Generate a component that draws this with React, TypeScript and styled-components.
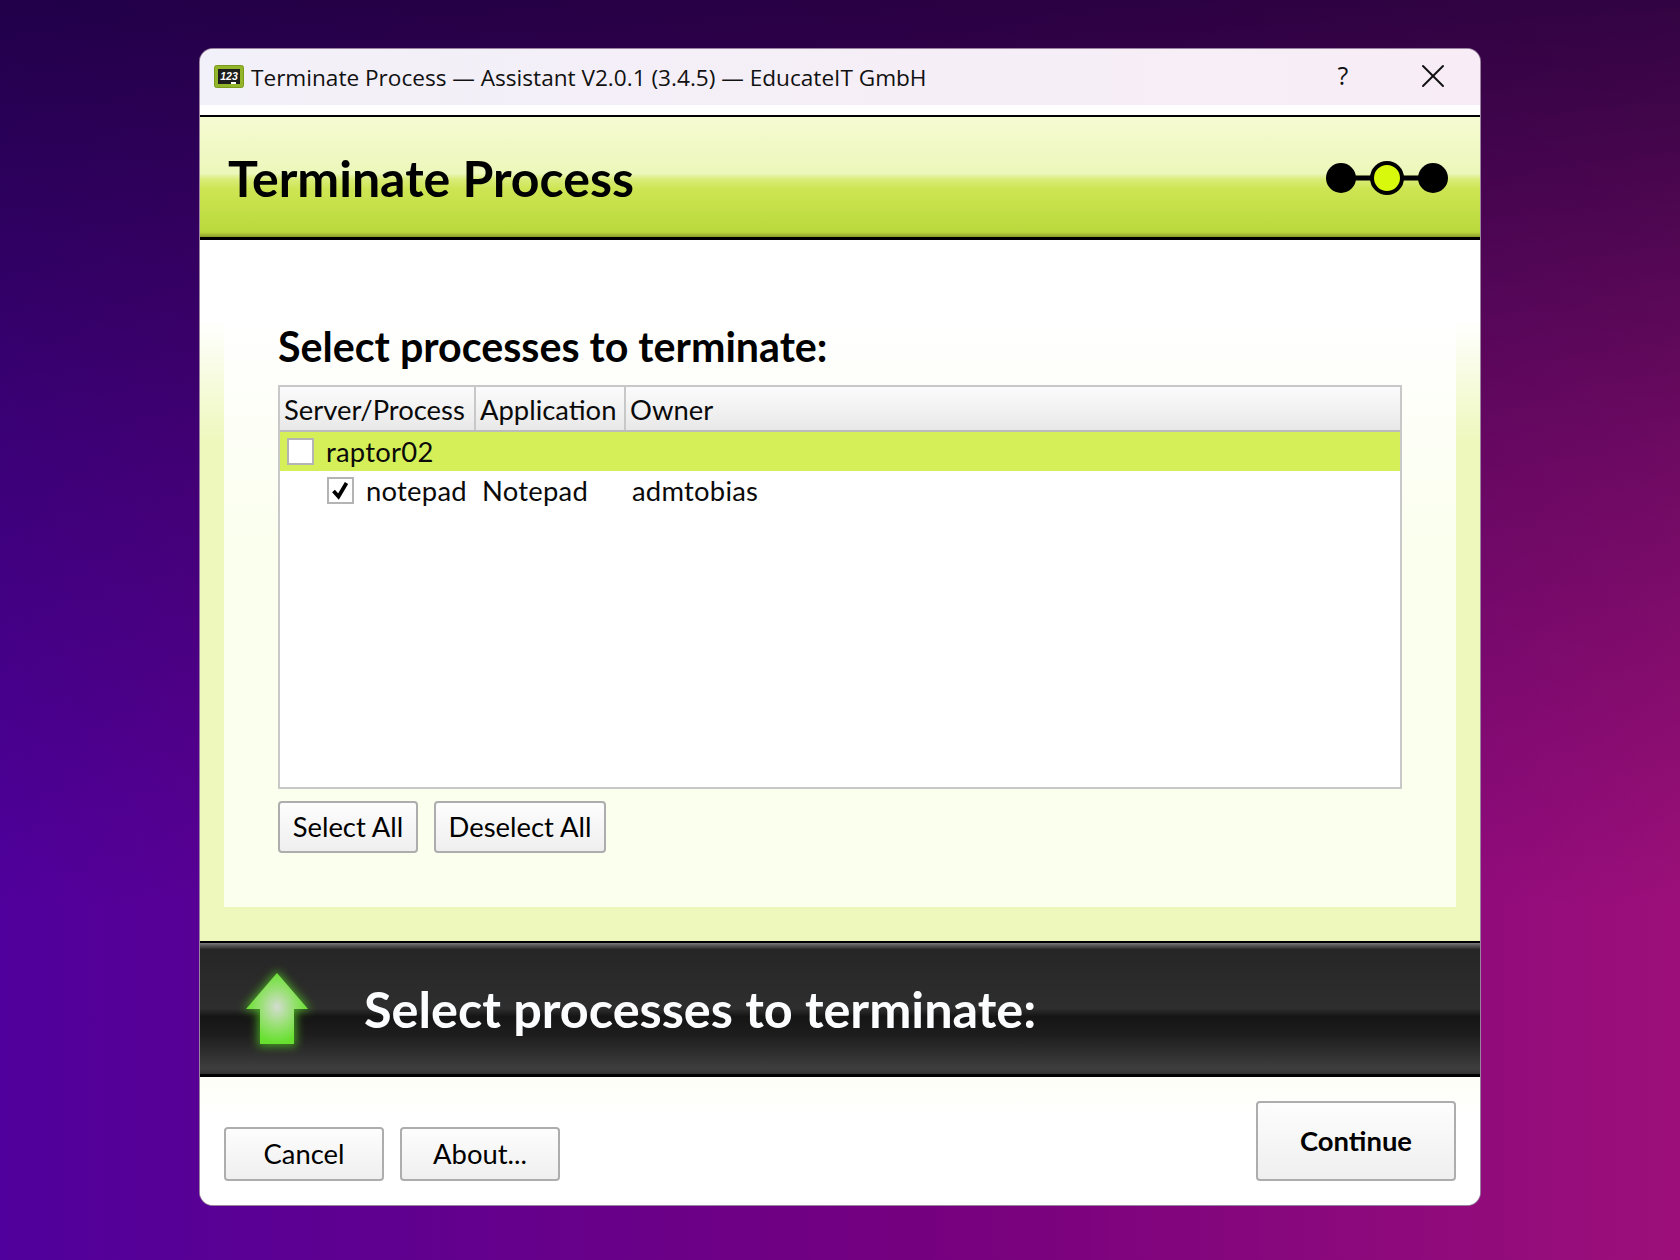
import React from "react";
import styled, { createGlobalStyle } from "styled-components";
import { X } from "lucide-react";

const GlobalStyle = createGlobalStyle`
  html, body {
    margin: 0;
    padding: 0;
    height: 1260px;
    overflow: hidden;
  }
  body {
    font-family: "Lato", "Open Sans", sans-serif;
    background:
      linear-gradient(180deg, rgba(20, 0, 50, 0.78) 0%, rgba(20, 0, 50, 0.35) 35%, rgba(20, 0, 50, 0) 72%),
      linear-gradient(90deg, #50009c 0%, #75007f 55%, #9c0f7a 100%);
  }
`;

const Desktop = styled.div`
  height: 1260px;
  display: flex;
  justify-content: center;
  align-items: flex-start;
  padding-top: 48px;
  box-sizing: border-box;
`;

const Window = styled.div`
  width: 1282px;
  height: 1158px;
  box-sizing: border-box;
  border: 1px solid rgba(120, 90, 130, 0.75);
  border-radius: 14px;
  overflow: hidden;
  display: flex;
  flex-direction: column;
  background: #fff;
`;

const TitleBar = styled.div`
  height: 56px;
  flex: none;
  display: flex;
  align-items: center;
  padding-left: 14px;
  background: linear-gradient(90deg, #f2f0f8 0%, #f8edf7 100%);
`;

const TitleText = styled.span`
  font-family: "Open Sans", "Noto Sans", sans-serif;
  font-size: 22.6px;
  color: #111;
  margin-left: 7px;
  flex: 1;
`;

const HelpGlyph = styled.span`
  font-family: "Open Sans", sans-serif;
  font-size: 25px;
  color: #111;
  width: 30px;
  text-align: center;
  margin-right: 55px;
  margin-top: -4px;
`;

const CloseButton = styled.span`
  display: flex;
  color: #111;
  margin-right: 27px;
  margin-top: -3px;
`;

const TitleGap = styled.div`
  height: 10px;
  flex: none;
  background: #fff;
`;

const Banner = styled.header`
  height: 120px;
  flex: none;
  border-top: 2px solid #000;
  border-bottom: 3px solid #000;
  display: flex;
  align-items: center;
  justify-content: space-between;
  padding: 0 31px 0 28px;
  background: linear-gradient(
    180deg,
    #f6fbd2 0%,
    #ecf7bb 47%,
    #d9ec78 52%,
    #cde552 60%,
    #bad93c 96%,
    #8c9e2c 100%
  );

  & > svg {
    margin-top: 2px;
  }
`;

const BannerTitle = styled.h1`
  margin: 2px 0 0;
  font-size: 50px;
  font-weight: 700;
  color: #000;
`;

const Body = styled.main`
  height: 701px;
  flex: none;
  box-sizing: border-box;
  padding: 0 24px 34px;
  display: flex;
  background: linear-gradient(180deg, #fff 0%, #fff 11.5%, #eef8bc 29%, #eef8bc 100%);
`;

const Panel = styled.section`
  flex: 1;
  padding: 83px 54px 0;
  background: linear-gradient(180deg, #fff 0%, #fff 12%, #fbffee 45%, #fbffee 100%);
`;

const Heading = styled.h2`
  margin: 0 0 16px;
  font-size: 41.2px;
  line-height: 46px;
  font-weight: 700;
  color: #000;
`;

const ListBox = styled.div`
  height: 404px;
  box-sizing: border-box;
  border: 2px solid #c8c8c8;
  background: #fff;
  font-size: 27.4px;
  color: #0a0a0a;
`;

const HeaderRow = styled.div`
  height: 43px;
  display: flex;
  border-bottom: 2px solid #bcbcbc;
  background: linear-gradient(180deg, #fbfbfb 0%, #f0f0f0 60%, #e8e8e8 100%);
`;

const HeaderCell = styled.div<{ $width?: number }>`
  ${(p) => (p.$width ? `width: ${p.$width}px;` : "flex: 1;")}
  box-sizing: border-box;
  padding: 4px 0 0 4px;
  line-height: 38px;
  border-right: ${(p) => (p.$width ? "2px solid #c8c8c8" : "none")};
`;

const Row = styled.div<{ $selected?: boolean; $indent: number; $height: number }>`
  height: ${(p) => p.$height}px;
  display: flex;
  align-items: center;
  padding-left: ${(p) => p.$indent}px;
  background: ${(p) => (p.$selected ? "#d5ef58" : "transparent")};
`;

const CheckBox = styled.span`
  width: 27px;
  height: 27px;
  flex: none;
  box-sizing: border-box;
  border: 2px solid #b4b4b4;
  background: #fff;
  display: flex;
  align-items: center;
  justify-content: center;
`;

const CellText = styled.span<{ $width?: number; $gap?: number }>`
  ${(p) => (p.$width ? `width: ${p.$width}px;` : "")}
  margin-left: ${(p) => p.$gap ?? 0}px;
  letter-spacing: 0.25px;
`;

const ListActions = styled.div`
  display: flex;
  gap: 16px;
  margin-top: 12px;
`;

const Button = styled.button<{ $width: number; $height: number; $bold?: boolean }>`
  width: ${(p) => p.$width}px;
  height: ${(p) => p.$height}px;
  box-sizing: border-box;
  border: 2px solid #adadad;
  border-radius: 4px;
  padding: 0 0 2px;
  font-family: inherit;
  font-size: 27.4px;
  font-weight: ${(p) => (p.$bold ? 700 : 400)};
  color: #000;
  background: linear-gradient(180deg, #fdfdfd 0%, #f6f6f6 50%, #efefef 100%);
`;

const StatusBar = styled.div`
  height: 136px;
  flex: none;
  box-sizing: border-box;
  border-top: 2px solid #000;
  border-bottom: 3px solid #000;
  display: flex;
  align-items: center;
  padding: 0 0 0 32px;
  background: linear-gradient(
    180deg,
    #7a7a7a 0%,
    #555 2%,
    #262626 5%,
    #2e2e2e 50%,
    #151515 56%,
    #1d1d1d 70%,
    #3e3e3e 96%,
    #333 100%
  );
`;

const StatusText = styled.div`
  margin-left: 42px;
  font-size: 50.4px;
  font-weight: 700;
  color: #fbfdff;
`;

const Footer = styled.footer`
  flex: 1;
  display: flex;
  align-items: flex-end;
  justify-content: space-between;
  padding: 0 24px 24px;
  background: linear-gradient(180deg, #fdfef6 0%, #fff 30%);
`;

const FooterGroup = styled.div`
  display: flex;
  gap: 16px;
`;

const AppIcon = () => (
  <svg width="30" height="24" viewBox="0 0 30 24">
    <rect x="0.5" y="0.5" width="29" height="22" rx="2" fill="#93b52a" stroke="#7c9a1e" />
    <rect x="4" y="4" width="22" height="15" fill="#1d1d1d" />
    <text x="15" y="15" textAnchor="middle" fontSize="10.5" fontWeight="900" fontStyle="italic" fontFamily="Liberation Sans" fill="#fff">
      123
    </text>
    <rect x="17" y="17" width="5" height="2" fill="#fff" />
  </svg>
);

const StepDots = () => (
  <svg width="124" height="36" viewBox="0 0 124 36">
    <line x1="15" y1="18" x2="108" y2="18" stroke="#000" strokeWidth="5" />
    <circle cx="16" cy="18" r="15" fill="#000" />
    <circle cx="62" cy="18" r="15" fill="#d8f80c" stroke="#000" strokeWidth="4" />
    <circle cx="108" cy="18" r="15" fill="#000" />
  </svg>
);

const CheckMark = () => (
  <svg width="19" height="19" viewBox="0 0 19 19">
    <path d="M2.5 10 L7.5 15.5 L15.5 2" fill="none" stroke="#000" strokeWidth="3.8" />
  </svg>
);

const UpArrow = () => (
  <svg width="90" height="100" viewBox="0 0 90 100">
    <defs>
      <radialGradient id="arrowFill" cx="50%" cy="48%" r="50%">
        <stop offset="0%" stopColor="#d4dcd0" />
        <stop offset="55%" stopColor="#96e070" />
        <stop offset="100%" stopColor="#68e030" />
      </radialGradient>
      <filter id="arrowGlow" x="-30%" y="-30%" width="160%" height="160%">
        <feGaussianBlur stdDeviation="5" />
      </filter>
    </defs>
    <path d="M45 12 L79 51 L64 51 L64 87 L26 87 L26 51 L11 51 Z" fill="#55d020" opacity="0.75" filter="url(#arrowGlow)" />
    <path d="M45 14 L76 50 L62 50 L62 85 L28 85 L28 50 L14 50 Z" fill="url(#arrowFill)" />
  </svg>
);

export default function App() {
  return (
    <Desktop>
      <GlobalStyle />
      <Window>
        <TitleBar>
          <AppIcon />
          <TitleText>Terminate Process — Assistant V2.0.1 (3.4.5) — EducateIT GmbH</TitleText>
          <HelpGlyph>?</HelpGlyph>
          <CloseButton>
            <X size={40} strokeWidth={1.2} />
          </CloseButton>
        </TitleBar>
        <TitleGap />
        <Banner>
          <BannerTitle>Terminate Process</BannerTitle>
          <StepDots />
        </Banner>
        <Body>
          <Panel>
            <Heading>Select processes to terminate:</Heading>
            <ListBox>
              <HeaderRow>
                <HeaderCell $width={196}>Server/Process</HeaderCell>
                <HeaderCell $width={150}>Application</HeaderCell>
                <HeaderCell>Owner</HeaderCell>
              </HeaderRow>
              <Row $selected $indent={7} $height={39}>
                <CheckBox />
                <CellText $gap={12}>raptor02</CellText>
              </Row>
              <Row $indent={47} $height={38}>
                <CheckBox>
                  <CheckMark />
                </CheckBox>
                <CellText $gap={12} $width={116}>notepad</CellText>
                <CellText $gap={0} $width={150}>Notepad</CellText>
                <CellText>admtobias</CellText>
              </Row>
            </ListBox>
            <ListActions>
              <Button $width={140} $height={52}>Select All</Button>
              <Button $width={172} $height={52}>Deselect All</Button>
            </ListActions>
          </Panel>
        </Body>
        <StatusBar>
          <UpArrow />
          <StatusText>Select processes to terminate:</StatusText>
        </StatusBar>
        <Footer>
          <FooterGroup>
            <Button $width={160} $height={54}>Cancel</Button>
            <Button $width={160} $height={54}>About...</Button>
          </FooterGroup>
          <Button $width={200} $height={80} $bold>Continue</Button>
        </Footer>
      </Window>
    </Desktop>
  );
}
